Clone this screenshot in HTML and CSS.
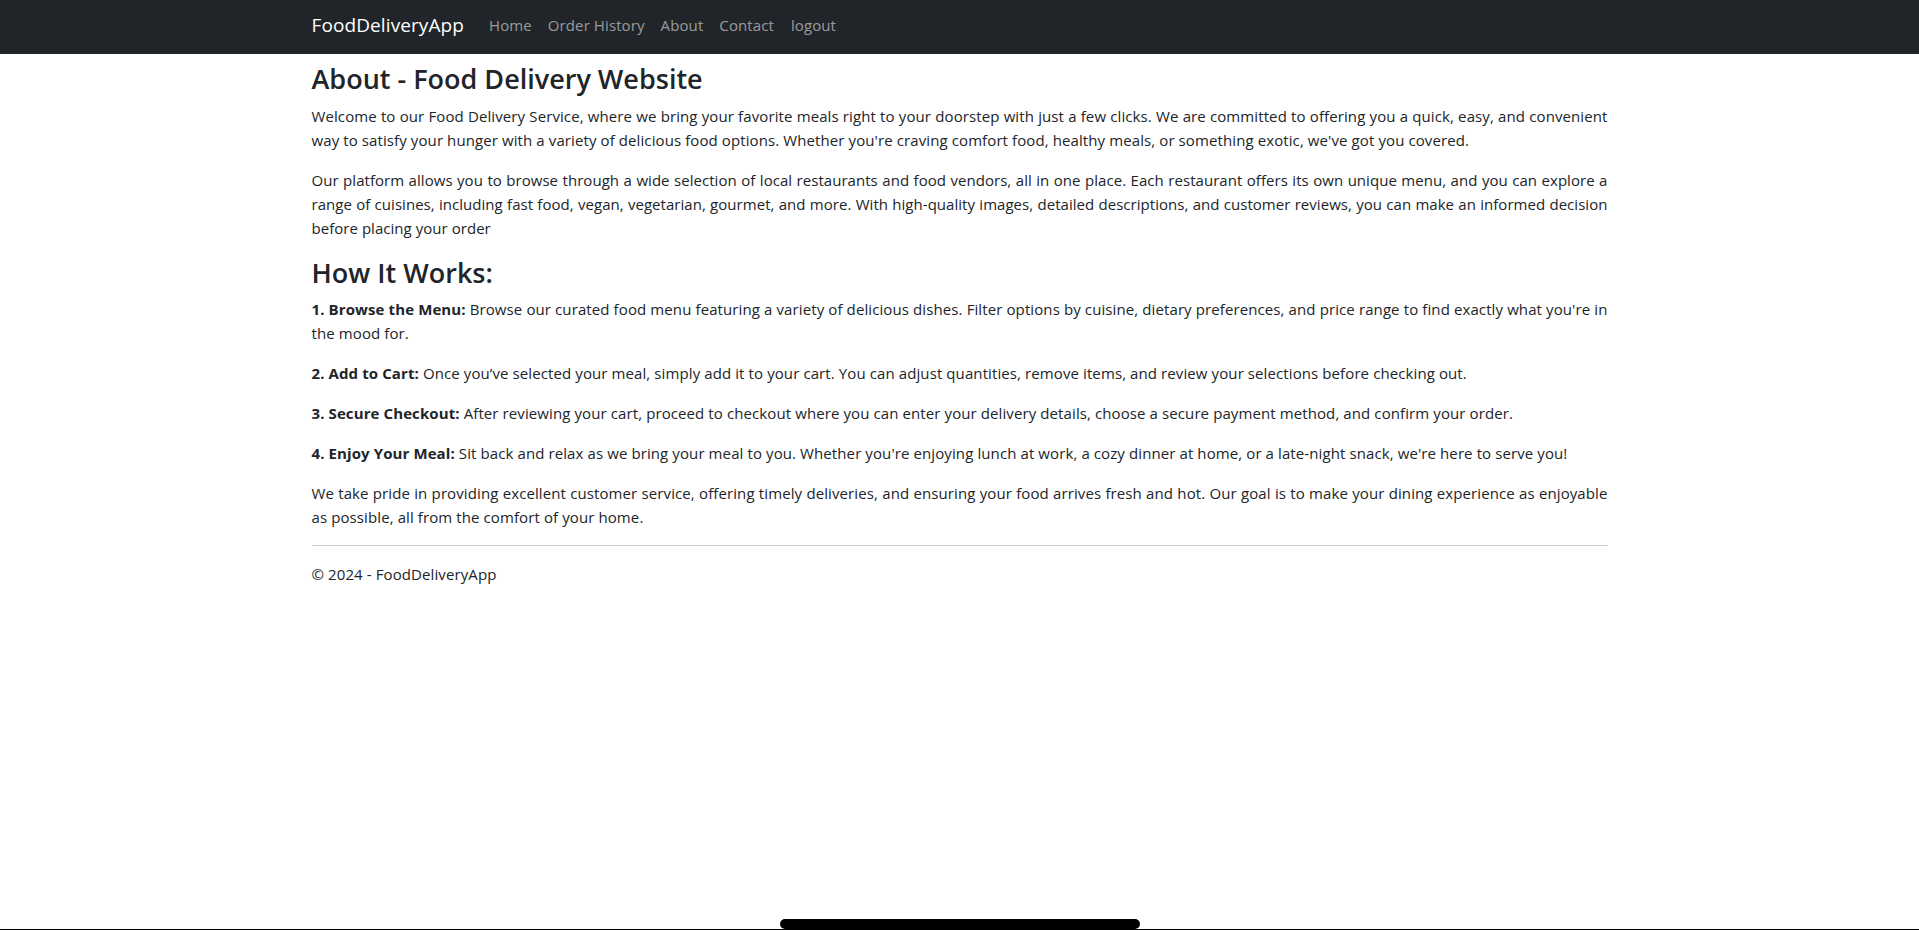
FILE: index.html
```html
<!DOCTYPE html>
<html lang="en">
<head>
<meta charset="utf-8">
<title>About - FoodDeliveryApp</title>
<link rel="stylesheet" href="styles.css">
</head>
<body>
<nav class="navbar">
  <div class="nav-inner">
    <a class="brand" href="#">FoodDeliveryApp</a>
    <ul class="nav">
      <li><a class="nav-link" href="#">Home</a></li>
      <li><a class="nav-link" href="#">Order History</a></li>
      <li><a class="nav-link" href="#">About</a></li>
      <li><a class="nav-link" href="#">Contact</a></li>
      <li><button class="nav-link logout" type="button">logout</button></li>
    </ul>
  </div>
</nav>
<div class="container">
  <main class="content">
    <h1 class="title">About - Food Delivery Website</h1>
    <p>Welcome to our Food Delivery Service, where we bring your favorite meals right to your doorstep with just a few clicks. We are committed to offering you a quick, easy, and convenient way to satisfy your hunger with a variety of delicious food options. Whether you're craving comfort food, healthy meals, or something exotic, we've got you covered.</p>
    <p class="snug">Our platform allows you to browse through a wide selection of local restaurants and food vendors, all in one place. Each restaurant offers its own unique menu, and you can explore a range of cuisines, including fast food, vegan, vegetarian, gourmet, and more. With high-quality images, detailed descriptions, and customer reviews, you can make an informed decision before placing your order</p>
    <h2 class="title">How It Works:</h2>
    <p><strong>1. Browse the Menu:</strong> Browse our curated food menu featuring a variety of delicious dishes. Filter options by cuisine, dietary preferences, and price range to find exactly what you're in the mood for.</p>
    <p><strong>2. Add to Cart:</strong> Once you’ve selected your meal, simply add it to your cart. You can adjust quantities, remove items, and review your selections before checking out.</p>
    <p><strong>3. Secure Checkout:</strong> After reviewing your cart, proceed to checkout where you can enter your delivery details, choose a secure payment method, and confirm your order.</p>
    <p><strong>4. Enjoy Your Meal:</strong> Sit back and relax as we bring your meal to you. Whether you're enjoying lunch at work, a cozy dinner at home, or a late-night snack, we're here to serve you!</p>
    <p>We take pride in providing excellent customer service, offering timely deliveries, and ensuring your food arrives fresh and hot. Our goal is to make your dining experience as enjoyable as possible, all from the comfort of your home.</p>
  </main>
  <hr class="rule">
  <footer class="footer">© 2024 - FoodDeliveryApp</footer>
</div>
<div class="home-indicator"></div>
<div class="bottom-line"></div>
</body>
</html>
```
FILE: styles.css
```css
* { box-sizing: border-box; }

html, body {
  margin: 0;
  padding: 0;
  background: #fff;
}

body {
  font-family: "Open Sans", "Noto Sans", sans-serif;
  font-size: 15px;
  line-height: 24px;
  letter-spacing: 0.1px;
  color: #212529;
}

.navbar {
  background: #212529;
  height: 54px;
  display: flex;
  align-items: center;
}

.nav-inner {
  width: 1296px;
  margin: 0 auto;
  padding-bottom: 4px;
  display: flex;
  align-items: center;
}

.brand {
  font-size: 19px;
  line-height: 30px;
  color: #fff;
  text-decoration: none;
  margin-right: 17px;
  padding: 5px 0;
}

.nav {
  list-style: none;
  margin: 0;
  padding: 0;
  display: flex;
  align-items: center;
}

.nav-link {
  display: block;
  padding: 8px 8px;
  color: rgba(255, 255, 255, 0.55);
  text-decoration: none;
  font-size: 15px;
  line-height: 24px;
  letter-spacing: 0.1px;
}

.logout {
  background: none;
  border: 0;
  font-family: inherit;
  margin-left: 1px;
  cursor: pointer;
}

.container {
  width: 1296px;
  margin: 0 auto;
  padding-top: 8px;
}

.title {
  font-size: 27px;
  font-weight: 600;
  letter-spacing: 0;
  line-height: 33.6px;
  margin: 0 0 8px;
}

.content p {
  margin: 0 0 16px;
  text-align: justify;
}

.content p.snug {
  letter-spacing: 0.04px;
}

.content strong {
  font-weight: 700;
}

.rule {
  margin: 0 0 16px;
  border: 0;
  border-top: 1px solid #212529;
  opacity: 0.25;
}

.footer {
  line-height: 24px;
}

.home-indicator {
  position: fixed;
  left: 780px;
  width: 360px;
  bottom: 1px;
  height: 10px;
  border-radius: 5px;
  background: #000;
}

.bottom-line {
  position: fixed;
  left: 0;
  right: 0;
  bottom: 0;
  height: 1px;
  background: #000;
}
```
